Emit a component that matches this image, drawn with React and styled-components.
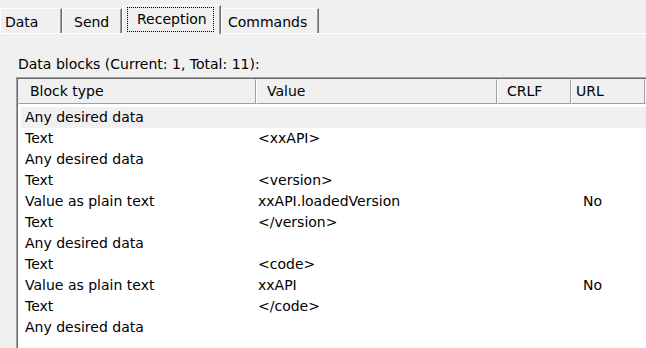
import React from "react";
import styled, { createGlobalStyle } from "styled-components";

const Global = createGlobalStyle`
  html, body { margin: 0; padding: 0; height: 100%; overflow: hidden; }
  body {
    background: #f0f0f0;
    font-family: "DejaVu Sans", Verdana, sans-serif;
    font-size: 14px;
    color: #000;
  }
`;

const Page = styled.div`
  width: 646px;
  height: 348px;
  overflow: hidden;
  display: flex;
  flex-direction: column;
`;

const TabStrip = styled.div`
  display: flex;
  align-items: flex-end;
  height: 33px;
  flex: none;
`;

const Tab = styled.div`
  position: relative;
  z-index: ${(p) => (p.$active ? 2 : 1)};
  box-sizing: border-box;
  display: flex;
  align-items: ${(p) => (p.$active ? "flex-start" : "center")};
  width: ${(p) => p.$w}px;
  height: ${(p) => (p.$active ? 29 : 25)}px;
  margin-bottom: ${(p) => (p.$active ? -1 : 0)}px;
  padding-top: ${(p) => (p.$active ? 1 : 2)}px;
  padding-left: ${(p) => p.$pl}px;
  background: #f0f0f0;
  border-top: 1px solid #fff;
  border-left: 1px solid #fff;
  border-right: 1px solid #696969;
  box-shadow: inset -1px 0 #a0a0a0;
  white-space: nowrap;
`;

const FocusRect = styled.span`
  display: inline-block;
  box-sizing: border-box;
  height: 25px;
  line-height: 23px;
  padding: 0 6px 0 9px;
  border: 1px dotted #000;
`;

const Panel = styled.div`
  flex: 1;
  border-top: 1px solid #fff;
  padding: 22px 0 0 16px;
  display: flex;
  flex-direction: column;
  min-height: 0;
`;

const Label = styled.div`
  line-height: 17px;
  margin-left: 2px;
`;

const ListBox = styled.div`
  margin-top: 4px;
  width: 640px;
  flex: 1;
  margin-bottom: -6px;
  background: #fff;
  border-top: 1px solid #a0a0a0;
  border-left: 1px solid #a0a0a0;
  box-shadow: inset 1px 1px #696969;
  padding: 1px 0 0 1px;
`;

const Header = styled.div`
  display: grid;
  grid-template-columns: 238px 241px 74px 74px 1fr;
  height: 25px;
  background: #f0f0f0;
`;

const HeadCell = styled.div`
  box-sizing: border-box;
  height: 25px;
  line-height: 23px;
  padding-left: ${(p) => p.$pl}px;
  border-top: 1px solid #f0f0f0;
  border-left: 1px solid ${(p) => (p.$first ? "#f0f0f0" : "#fff")};
  border-right: 1px solid ${(p) => (p.$filler ? "#f0f0f0" : "#a0a0a0")};
  border-bottom: 1px solid #a0a0a0;
  white-space: nowrap;
`;

const Rows = styled.div`
  padding-top: 3px;
`;

const Row = styled.div`
  display: grid;
  grid-template-columns: 235px 241px 74px 74px 1fr;
  margin-left: 3px;
  height: 21px;
  line-height: 21px;
  background: ${(p) => (p.$selected ? "#f0f0f0" : "transparent")};
  white-space: nowrap;
`;

const Cell = styled.div`
  padding-left: ${(p) => p.$pl}px;
  overflow: hidden;
`;

const rows = [
  ["Any desired data", "", "", ""],
  ["Text", "<xxAPI>", "", ""],
  ["Any desired data", "", "", ""],
  ["Text", "<version>", "", ""],
  ["Value as plain text", "xxAPI.loadedVersion", "", "No"],
  ["Text", "</version>", "", ""],
  ["Any desired data", "", "", ""],
  ["Text", "<code>", "", ""],
  ["Value as plain text", "xxAPI", "", "No"],
  ["Text", "</code>", "", ""],
  ["Any desired data", "", "", ""],
];

export default function App() {
  return (
    <Page>
      <Global />
      <TabStrip>
        <Tab $w={62} $pl={4}>Data</Tab>
        <Tab $w={60} $pl={11}>Send</Tab>
        <Tab $w={99} $pl={4} $active>
          <FocusRect>Reception</FocusRect>
        </Tab>
        <Tab $w={98} $pl={6}>Commands</Tab>
      </TabStrip>
      <Panel>
        <Label>Data blocks (Current: 1, Total: 11):</Label>
        <ListBox>
          <Header>
            <HeadCell $first $pl={11}>Block type</HeadCell>
            <HeadCell $pl={10}>Value</HeadCell>
            <HeadCell $pl={9}>CRLF</HeadCell>
            <HeadCell $pl={4}>URL</HeadCell>
            <HeadCell $filler $pl={0} />
          </Header>
          <Rows>
            {rows.map((r, i) => (
              <Row key={i} $selected={i === 0}>
                <Cell $pl={4}>{r[0]}</Cell>
                <Cell $pl={2}>{r[1]}</Cell>
                <Cell $pl={4}>{r[2]}</Cell>
                <Cell $pl={12}>{r[3]}</Cell>
                <Cell $pl={0} />
              </Row>
            ))}
          </Rows>
        </ListBox>
      </Panel>
    </Page>
  );
}
